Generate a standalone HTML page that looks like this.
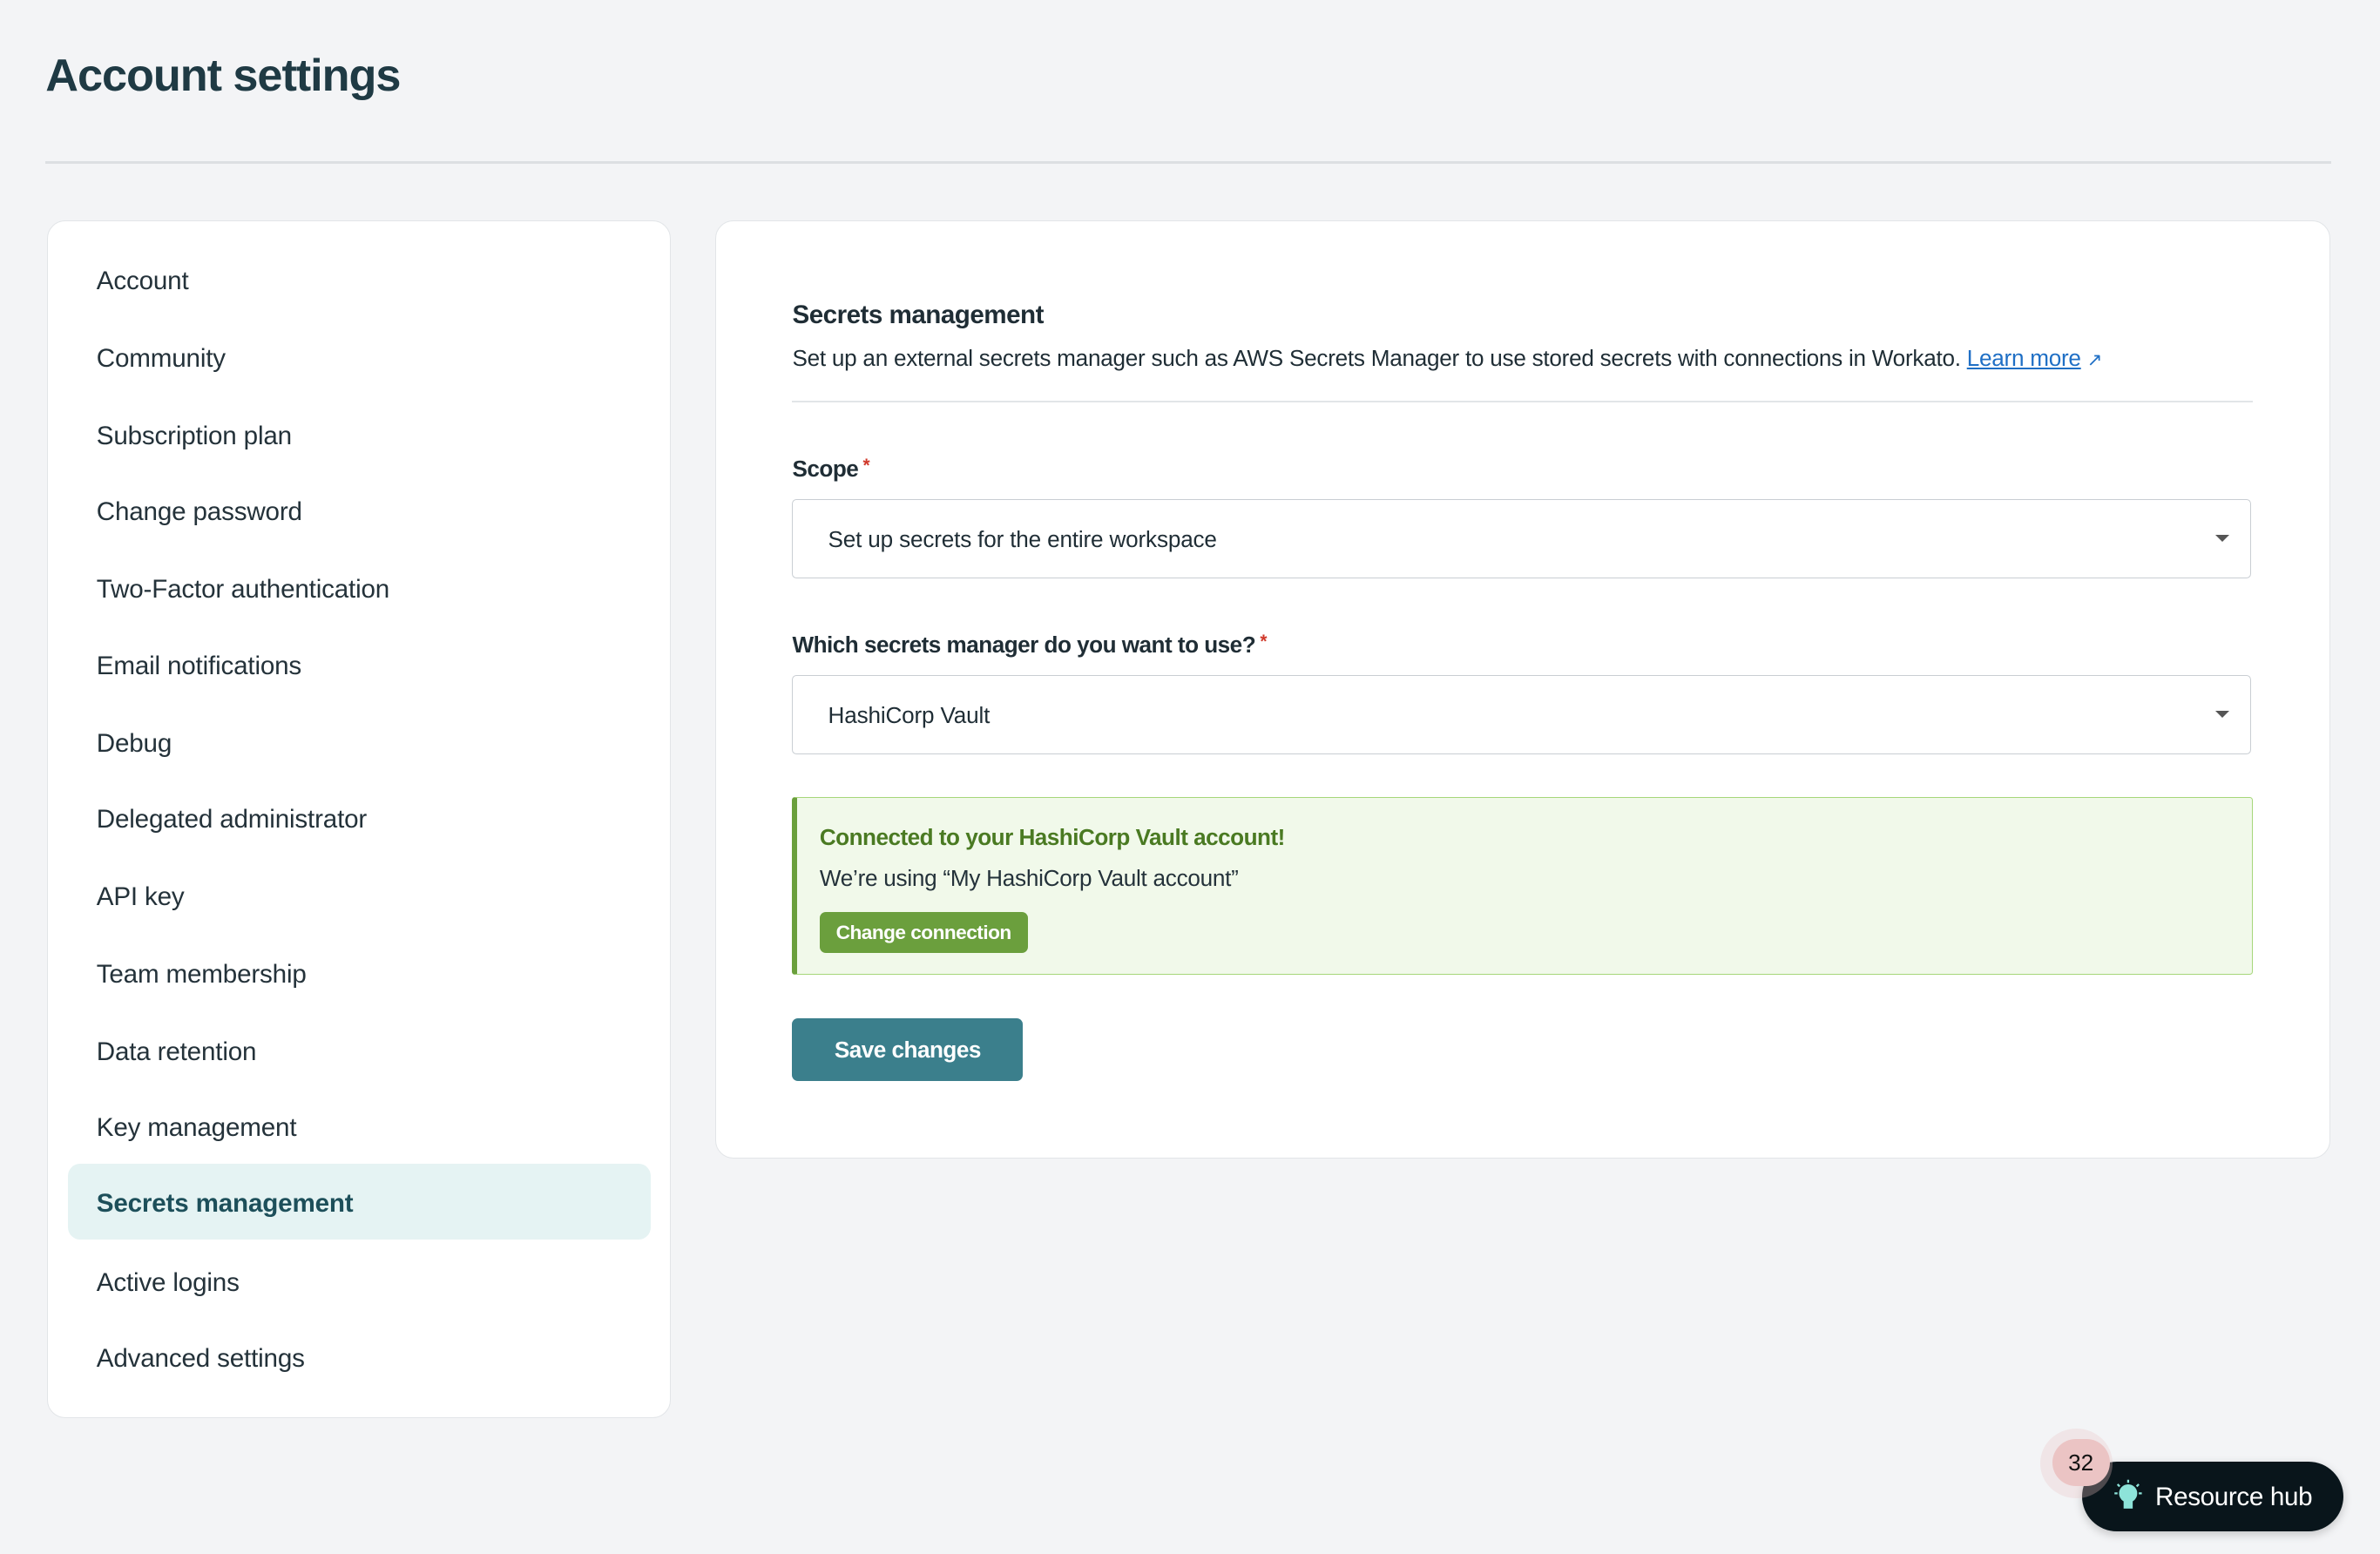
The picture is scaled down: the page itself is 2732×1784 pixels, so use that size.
<!DOCTYPE html>
<html><head><meta charset="utf-8"><style>
html,body{margin:0;padding:0;background:#f3f4f6;overflow:hidden}
#w{zoom:1.7423;width:1568px;height:1024px;position:relative;font-family:"Liberation Sans",sans-serif;color:#1f2d35}
.a{position:absolute;white-space:nowrap}
h1{position:absolute;left:30px;top:33px;margin:0;font-size:30px;font-weight:bold;color:#1f3a44;letter-spacing:-0.6px}
.hr{position:absolute;left:30px;top:106px;width:1506px;height:2px;background:#dcdfe2}
.card{position:absolute;background:#fff;border:1px solid #e2e5e8;border-radius:12px}
.it{position:absolute;left:32px;font-size:17px;color:#24323a;letter-spacing:-0.1px}
.sel{position:absolute;left:522px;width:960px;height:51px;border:1px solid #c9ced3;border-radius:3px;background:#fff}
.sel span{position:absolute;left:23px;top:17px;font-size:15px;letter-spacing:-0.1px}
.sel i{position:absolute;right:14px;top:23px;border-left:5px solid transparent;border-right:5px solid transparent;border-top:5px solid #555}
.lb{font-size:15px;font-weight:bold;color:#1f2d35;letter-spacing:-0.3px}
.req{color:#d0392b;font-size:12px;vertical-align:top;margin-left:3px}
</style></head><body><div id="w">
<h1>Account settings</h1>
<div class="hr"></div>
<div class="card" style="left:31px;top:145px;width:410px;height:788px">
<div style="position:absolute;left:13px;top:621px;width:384px;height:50px;background:#e5f3f3;border-radius:8px"></div>
<div class="it" style="top:30px">Account</div>
<div class="it" style="top:81px">Community</div>
<div class="it" style="top:132px">Subscription plan</div>
<div class="it" style="top:182px">Change password</div>
<div class="it" style="top:233px">Two-Factor authentication</div>
<div class="it" style="top:284px">Email notifications</div>
<div class="it" style="top:335px">Debug</div>
<div class="it" style="top:385px">Delegated administrator</div>
<div class="it" style="top:436px">API key</div>
<div class="it" style="top:487px">Team membership</div>
<div class="it" style="top:538px">Data retention</div>
<div class="it" style="top:588px">Key management</div>
<div class="it" style="top:638px;font-weight:bold;color:#1d4f5a">Secrets management</div>
<div class="it" style="top:690px">Active logins</div>
<div class="it" style="top:740px">Advanced settings</div>
</div>
<div class="card" style="left:471px;top:145px;width:1063px;height:617px"></div>
<div class="a" style="left:522px;top:198px;font-size:17px;font-weight:bold;letter-spacing:-0.3px">Secrets management</div>
<div class="a" style="left:522px;top:227px;font-size:15px;letter-spacing:-0.15px">Set up an external secrets manager such as AWS Secrets Manager to use stored secrets with connections in Workato. <span style="color:#1f6fc5;text-decoration:underline">Learn more</span> <span style="color:#1f6fc5;font-size:12px">&#8599;</span></div>
<div class="a" style="left:522px;top:264px;width:962px;height:1px;background:#e2e5e8"></div>
<div class="a lb" style="left:522px;top:300px">Scope<span class="req">*</span></div>
<div class="sel" style="top:329px"><span>Set up secrets for the entire workspace</span><i></i></div>
<div class="a lb" style="left:522px;top:416px">Which secrets manager do you want to use?<span class="req">*</span></div>
<div class="sel" style="top:445px"><span>HashiCorp Vault</span><i></i></div>
<div class="a" style="left:522px;top:525px;width:958px;height:116px;background:#f1f9ea;border:1px solid #a6d77a;border-left:4px solid #6a9f3c;border-radius:2px"></div>
<div class="a" style="left:540px;top:543px;font-size:15px;font-weight:bold;color:#4a7a22;letter-spacing:-0.3px">Connected to your HashiCorp Vault account!</div>
<div class="a" style="left:540px;top:570px;font-size:15px;letter-spacing:-0.15px;color:#24323a">We’re using “My HashiCorp Vault account”</div>
<div class="a" style="left:540px;top:601px;width:137px;height:27px;background:#6b9f3d;border-radius:4px;color:#fff;font-size:13px;font-weight:bold;line-height:27px;text-align:center;letter-spacing:-0.3px">Change connection</div>
<div class="a" style="left:522px;top:671px;width:152px;height:41px;background:#3b7f8c;border-radius:4px;color:#fff;font-size:15px;font-weight:bold;line-height:42px;text-align:center;letter-spacing:-0.3px">Save changes</div>
<div class="a" style="left:1372px;top:963px;width:172px;height:46px;background:#09151b;border-radius:23px;box-shadow:0 2px 6px rgba(0,0,0,.2)">
<svg style="position:absolute;left:18px;top:11px" width="24" height="24" viewBox="0 0 24 24"><circle cx="12" cy="10" r="6" fill="#8de3d9"/><rect x="9" y="15" width="6" height="5" fill="#8de3d9"/><g stroke="#8de3d9" stroke-width="1.3"><path d="M12 1v2M3 10h2M19 10h2M5 4l1.4 1.4M19 4l-1.4 1.4"/></g></svg>
<div class="a" style="left:48px;top:14px;color:#fff;font-size:17px;letter-spacing:-0.2px">Resource hub</div></div>
<div class="a" style="left:1344px;top:941px;width:48px;height:46px;border-radius:50%;background:rgba(235,196,196,.3)"></div>
<div class="a" style="left:1352px;top:948px;width:38px;height:31px;border-radius:16px;background:#ebc4c4;font-size:15px;line-height:31px;text-align:center;color:#111">32</div>
</div></body></html>
